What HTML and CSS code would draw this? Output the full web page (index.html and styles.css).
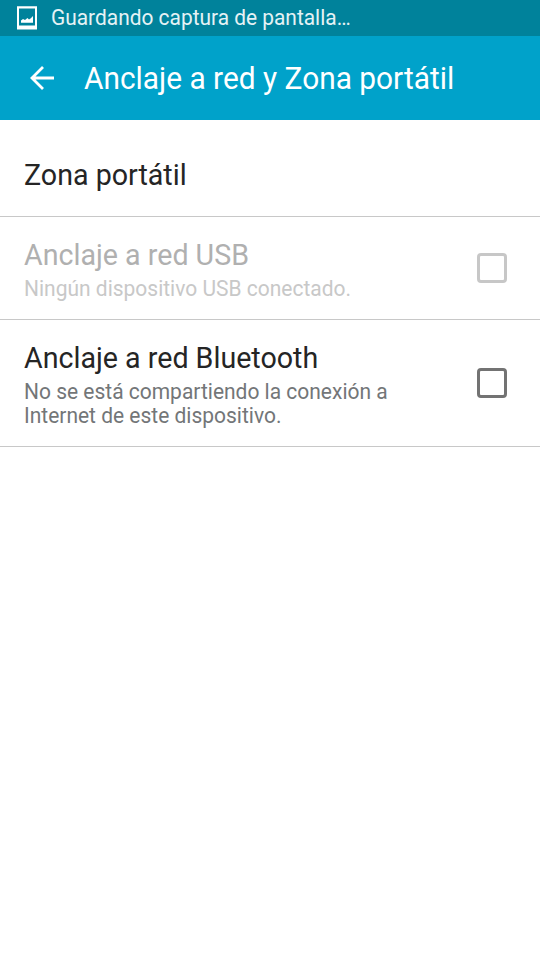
FILE: index.html
```html
<!DOCTYPE html>
<html lang="es">
<head>
<meta charset="utf-8">
<title>Anclaje a red y Zona portátil</title>
<link rel="stylesheet" href="styles.css">
</head>
<body>
<div class="status">
<svg class="status-icon" width="20" height="24" viewBox="0 0 20 24"><path fill="#fff" fill-rule="evenodd" d="M0 0.300h20v23.200H0zM2 2.500v17h16V2.500zM4 16.700v-2.200l2-1.500 2 1 2.500-2 1.500 1.500 1.500-1L16 10v6.700z"/></svg>
<span class="status-text">Guardando captura de pantalla…</span>
</div>
<header class="bar">
<svg class="back" width="24" height="24" viewBox="0 0 24 24"><path fill="none" stroke="#fff" stroke-width="2.8" d="M24 12H3M13 1L2 12l11 11"/></svg>
<h1 class="heading">Anclaje a red y Zona portátil</h1>
</header>
<main>
<section class="row row-single"><div class="title">Zona portátil</div></section>
<section class="row row-usb disabled"><div class="text"><div class="title">Anclaje a red USB</div><div class="summary">Ningún dispositivo USB conectado.</div></div><span class="check"></span></section>
<section class="row row-bt"><div class="text"><div class="title">Anclaje a red Bluetooth</div><div class="summary">No se está compartiendo la conexión a<br>Internet de este dispositivo.</div></div><span class="check"></span></section>
</main>
</body>
</html>
```
FILE: styles.css
```css
* { box-sizing: border-box; }
body { margin: 0; background: #fff; font-family: Roboto, sans-serif; color: #252525; }
.status { height: 36px; display: flex; align-items: center; padding-left: 17px; background: #00829b; color: #e5f2f5; }
.status-icon { margin-right: 14px; }
.status-text, .heading, .title, .summary { transform-origin: left center; white-space: nowrap; }
.status-text { font-size: 21.5px; line-height: 36px; transform: scaleX(0.972); }
.bar { height: 84px; display: flex; align-items: center; padding-left: 30px; background: #00a2ca; color: #fff; }
.back { margin-right: 30px; }
.heading { margin: 2px 0 0; font-size: 31px; line-height: 36px; font-weight: 400; transform: scaleX(0.963); }
.row { display: flex; align-items: center; justify-content: space-between; padding: 0 33px 0 24px; border-bottom: 1px solid #c8c8c8; }
.row-single { height: 97px; padding-top: 14px; }
.row-usb { height: 103px; }
.row-bt { height: 127px; }
.title { font-size: 30px; line-height: 36px; transform: scaleX(0.954); }
.text { padding-top: 2px; }
.text .title { margin-bottom: 4px; }
.summary { font-size: 21.5px; line-height: 24px; color: #737678; transform: scaleX(0.976); }
.check { width: 30px; height: 30px; border: 3px solid #737373; border-radius: 4px; }
.disabled .title { color: #b0b0b0; }
.disabled .summary { color: #c8c8c8; }
.disabled .check { border-color: #c7c7c7; }
```
